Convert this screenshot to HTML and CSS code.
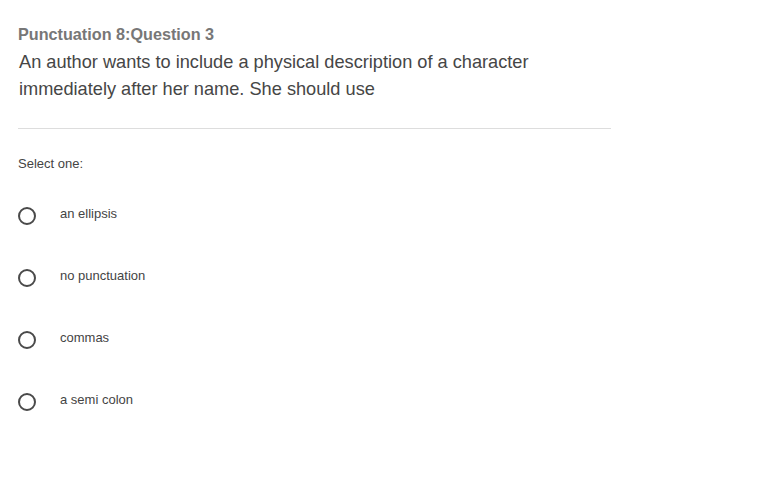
FILE: index.html
```html
<!DOCTYPE html>
<html>
<head>
<meta charset="utf-8">
<link rel="stylesheet" href="styles.css">
</head>
<body>
<div class="quiz">
  <h2 class="title">Punctuation 8:Question 3</h2>
  <p class="question">An author wants to include a physical description of a character immediately after her name. She should use</p>
  <hr class="divider">
  <p class="prompt">Select one:</p>
  <ul class="options">
    <li class="option"><span class="radio"></span><span class="label">an ellipsis</span></li>
    <li class="option"><span class="radio"></span><span class="label">no punctuation</span></li>
    <li class="option"><span class="radio"></span><span class="label">commas</span></li>
    <li class="option"><span class="radio"></span><span class="label">a semi colon</span></li>
  </ul>
</div>
</body>
</html>
```
FILE: styles.css
```css
html, body {
  margin: 0;
  padding: 0;
  background: #fff;
}
body {
  font-family: "Liberation Sans", Arial, sans-serif;
  color: #444;
}
.quiz {
  width: 593px;
  padding: 24px 0 0 18px;
}
.title {
  margin: 0;
  font-size: 16.2px;
  line-height: 20px;
  font-weight: bold;
  color: #777;
}
.question {
  margin: 5px 0 0 1px;
  font-size: 18.2px;
  line-height: 27px;
  color: #464646;
  width: 540px;
}
.divider {
  border: 0;
  border-top: 1px solid #ddd;
  margin: 25px 0 0 0;
  height: 0;
}
.prompt {
  margin: 26px 0 0 0;
  font-size: 13px;
  line-height: 18px;
  color: #444;
}
.options {
  list-style: none;
  margin: 32px 0 0 0;
  padding: 0;
  display: flex;
  flex-direction: column;
  gap: 42px;
}
.option {
  display: flex;
  align-items: flex-start;
}
.radio {
  box-sizing: border-box;
  width: 18px;
  height: 18px;
  border: 2px solid #4a4a4a;
  border-radius: 50%;
  margin-top: 2px;
  flex: none;
}
.label {
  margin-left: 24px;
  font-size: 13px;
  line-height: 18px;
  color: #444;
}
```
